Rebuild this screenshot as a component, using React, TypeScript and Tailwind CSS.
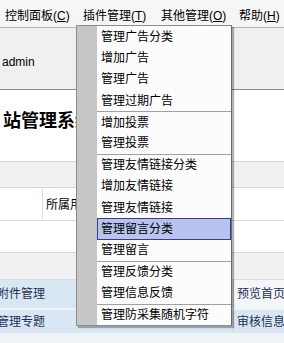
import React from "react";

const topMenus = [
  { label: "控制面板", key: "C" },
  { label: "插件管理", key: "T" },
  { label: "其他管理", key: "O" },
  { label: "帮助", key: "H" },
];

type MenuItem = { label: string; sep?: boolean; active?: boolean };

const pluginItems: MenuItem[] = [
  { label: "管理广告分类" },
  { label: "增加广告" },
  { label: "管理广告" },
  { label: "管理过期广告" },
  { label: "增加投票", sep: true },
  { label: "管理投票" },
  { label: "管理友情链接分类", sep: true },
  { label: "增加友情链接" },
  { label: "管理友情链接" },
  { label: "管理留言分类", active: true },
  { label: "管理留言" },
  { label: "管理反馈分类", sep: true },
  { label: "管理信息反馈" },
  { label: "管理防采集随机字符", sep: true },
];

function DropMenu() {
  return (
    <div className="absolute left-[76px] top-[25px] w-[156px] border border-[#8c8c8c] border-r-[#6a6a6a] bg-[#fcfcfc] shadow-[2px_2px_1px_rgba(0,0,0,0.3)]">
      {pluginItems.map((item) => (
        <div key={item.label} className="flex h-[21.36px]">
          <div className="w-[20px] shrink-0 bg-[#c6c6c6]" />
          <div
            className={
              item.active
                ? "flex flex-1 items-center border border-[#3c3a8e] bg-[#b8c3ee] pl-[3px]"
                : item.sep
                ? "flex flex-1 items-center border-t border-[#a0a0a0] pl-[4px]"
                : "flex flex-1 items-center pl-[4px]"
            }
          >
            <span className="text-[12px] leading-[14px] text-black">
              {item.label}
            </span>
          </div>
        </div>
      ))}
    </div>
  );
}

export default function App() {
  return (
    <div className="relative flex h-[343px] w-[284px] flex-col overflow-hidden bg-white font-['Liberation_Sans','Noto_Sans_CJK_SC',sans-serif] text-black">
      {/* menu bar */}
      <div className="flex h-[28px] shrink-0 border-b border-[#b4b4b4] bg-[#f6f6f6] pt-[9px] text-[12px] leading-[14px]">
        {topMenus.map((m) => (
          <div key={m.key} className="w-[78px] shrink-0 pl-[5px] whitespace-nowrap">
            {m.label}(<span className="underline">{m.key}</span>)
          </div>
        ))}
      </div>

      {/* user strip */}
      <div className="flex h-[62px] shrink-0 items-end border-b border-[#8a8a8a] bg-[#f0f0f0] pb-[20px] pl-[2px] text-[12px] leading-[14px]">
        admin
      </div>

      {/* title */}
      <div className="flex h-[71px] shrink-0 items-center pb-[10px] pl-[3px]">
        <span className="whitespace-nowrap text-[18px] font-bold leading-[20px] tracking-[0px]">
          站管理系统
        </span>
      </div>

      <div className="h-[27px] shrink-0 border-y border-[#d6d6d6] bg-[#f1f1f1]" />

      <div className="flex h-[33px] shrink-0 border-b border-[#dadada]">
        <div className="w-[43px] shrink-0 border-r border-[#e0e0e0]" />
        <div className="flex flex-1 items-center pl-[3px] pt-[2px] text-[12px] leading-[14px]">
          所属用户
        </div>
      </div>

      <div className="h-[32px] shrink-0 border-b border-[#d6d6d6]" />

      <div className="h-[27px] shrink-0 border-b border-[#dcdcdc] bg-[#f1f1f1]" />

      <div className="flex h-[28px] shrink-0 text-[12px] leading-[14px] text-[#1e2f52]">
        <div className="flex flex-1 items-center bg-[#d9e7f4] pl-0">
          <span className="ml-[-3px] whitespace-nowrap">附件管理</span>
        </div>
        <div className="flex w-[51px] shrink-0 items-center border-l border-[#c9d4df] bg-[#f4f7fa] pl-[3px]">
          <span className="whitespace-nowrap">预览首页</span>
        </div>
      </div>

      <div className="h-[2px] shrink-0 bg-[#eef3f8]" />

      <div className="flex h-[23px] shrink-0 text-[12px] leading-[14px] text-[#1e2f52]">
        <div className="flex flex-1 items-center bg-[#d9e7f4]">
          <span className="ml-[-3px] whitespace-nowrap">管理专题</span>
        </div>
        <div className="flex w-[51px] shrink-0 items-center border-l border-[#c9d4df] bg-[#d9e7f4] pl-[3px]">
          <span className="whitespace-nowrap">审核信息</span>
        </div>
      </div>

      <div className="flex-1 bg-[#eef3f8]" />

      <DropMenu />
    </div>
  );
}
